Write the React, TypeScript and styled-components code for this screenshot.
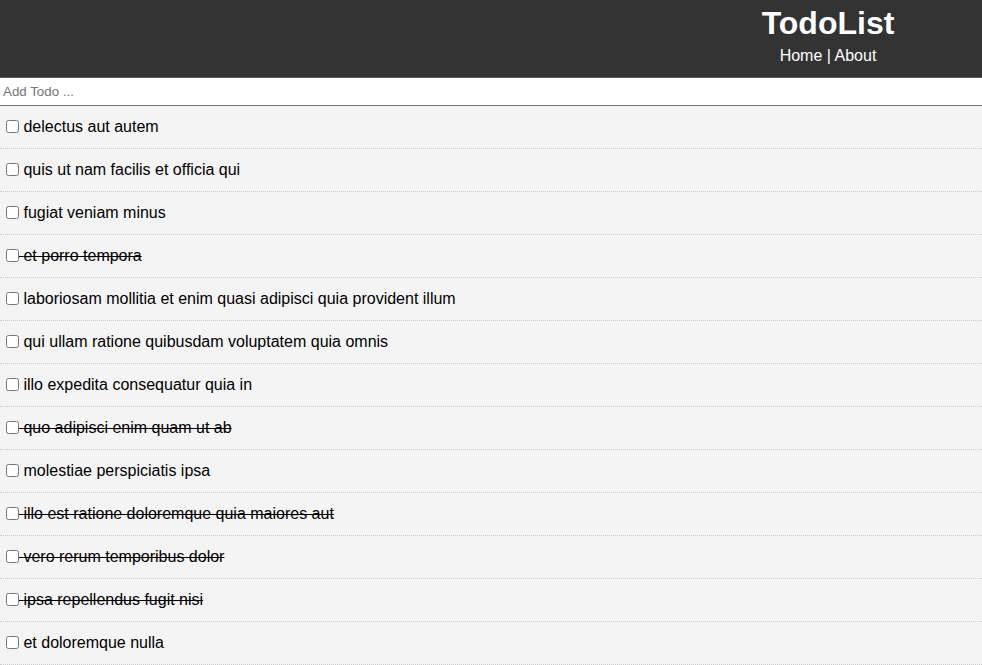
import React from "react";
import styled, { createGlobalStyle } from "styled-components";

const GlobalStyle = createGlobalStyle`
  html, body {
    margin: 0;
    padding: 0;
    overflow: hidden;
  }
  body {
    font-family: Arial, "Liberation Sans", sans-serif;
    line-height: 1.4;
    background: #fff;
    color: #000;
  }
`;

const AppWrap = styled.div`
  width: 1656px;
`;

const Header = styled.header`
  background: #333;
  color: #fff;
  text-align: center;
  padding: 5px 10px 10px;
  height: 62px;
`;

const Title = styled.h1`
  margin: 0;
  font-size: 32px;
  line-height: 36px;
  font-weight: bold;
`;

const NavLinks = styled.div`
  font-size: 16px;
  line-height: 20px;
  margin-top: 5px;
`;

const NavLink = styled.a`
  color: #fff;
  text-decoration: none;
`;

const Form = styled.form`
  display: flex;
`;

const TextInput = styled.input`
  flex: 10;
  box-sizing: border-box;
  height: 29px;
  padding: 0 3px;
  border: none;
  border-top: 1px solid #5c5c5c;
  border-bottom: 1px solid #767676;
  font-family: Arial, "Liberation Sans", sans-serif;
  font-size: 13.33px;
  outline: none;
  &::placeholder {
    color: #757575;
  }
`;

const SubmitButton = styled.input`
  flex: 1;
`;

const Item = styled.div<{ $done: boolean }>`
  background: #f4f4f4;
  padding: 10px 10px 10px 2px;
  border-bottom: 1px dotted #ccc;
  font-size: 16px;
  line-height: 22px;
  text-decoration: ${(p) => (p.$done ? "line-through" : "none")};
`;

const Check = styled.input`
  margin: 3px 0 3px 4px;
  width: 13px;
  height: 13px;
  vertical-align: -1px;
`;

const todos = [
  { title: "delectus aut autem", completed: false },
  { title: "quis ut nam facilis et officia qui", completed: false },
  { title: "fugiat veniam minus", completed: false },
  { title: "et porro tempora", completed: true },
  { title: "laboriosam mollitia et enim quasi adipisci quia provident illum", completed: false },
  { title: "qui ullam ratione quibusdam voluptatem quia omnis", completed: false },
  { title: "illo expedita consequatur quia in", completed: false },
  { title: "quo adipisci enim quam ut ab", completed: true },
  { title: "molestiae perspiciatis ipsa", completed: false },
  { title: "illo est ratione doloremque quia maiores aut", completed: true },
  { title: "vero rerum temporibus dolor", completed: true },
  { title: "ipsa repellendus fugit nisi", completed: true },
  { title: "et doloremque nulla", completed: false },
];

export default function App() {
  return (
    <AppWrap>
      <GlobalStyle />
      <Header>
        <Title>TodoList</Title>
        <NavLinks>
          <NavLink href="#">Home</NavLink> | <NavLink href="#">About</NavLink>
        </NavLinks>
      </Header>
      <Form onSubmit={(e) => e.preventDefault()}>
        <TextInput type="text" placeholder="Add Todo ..." />
        <SubmitButton type="submit" value="Submit" />
      </Form>
      {todos.map((t, i) => (
        <Item key={i} $done={t.completed}>
          <Check type="checkbox" /> {t.title}
        </Item>
      ))}
    </AppWrap>
  );
}
